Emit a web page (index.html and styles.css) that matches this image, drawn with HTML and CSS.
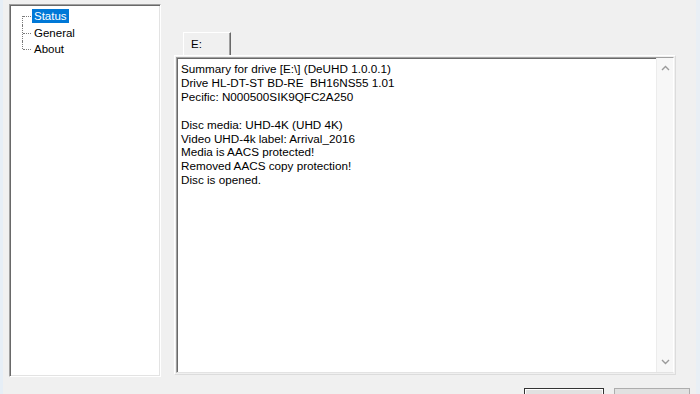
FILE: index.html
```html
<!DOCTYPE html>
<html lang="en">
<head>
  <meta charset="UTF-8" />
  <title>DeUHD</title>
  <link rel="stylesheet" href="styles.css">
</head>
<body>
  <div class="window">
    <div class="main">
      <div class="tree">
        <ul class="tree-list">
          <li class="tree-item selected"><span>Status</span></li>
          <li class="tree-item"><span>General</span></li>
          <li class="tree-item last"><span>About</span></li>
        </ul>
      </div>

      <div class="tabs">
        <div class="tab-strip">
          <div class="tab active">E:</div>
        </div>
        <div class="tab-page">
          <div class="textbox">
            <div class="log">Summary for drive [E:\] (DeUHD 1.0.0.1)
Drive HL-DT-ST BD-RE  BH16NS55 1.01
Pecific: N000500SIK9QFC2A250

Disc media: UHD-4K (UHD 4K)
Video UHD-4k label: Arrival_2016
Media is AACS protected!
Removed AACS copy protection!
Disc is opened.</div>
            <div class="scrollbar">
              <svg class="arrow" width="9" height="6" viewBox="0 0 9 6"><path d="M1 5 L4.5 1.5 L8 5" fill="none" stroke="#9a9a9a" stroke-width="1.4"/></svg>
              <svg class="arrow" width="9" height="6" viewBox="0 0 9 6"><path d="M1 1 L4.5 4.5 L8 1" fill="none" stroke="#9a9a9a" stroke-width="1.4"/></svg>
            </div>
          </div>
        </div>
      </div>
    </div>

    <div class="buttons">
      <div class="btn default"></div>
      <div class="btn"></div>
    </div>
  </div>
</body>
</html>
```

FILE: styles.css
```css
* {
  margin: 0;
  padding: 0;
  box-sizing: border-box;
}

body, html {
  width: 100%;
  height: 100%;
  overflow: hidden;
  background: #f0f0f0;
  font-family: 'Liberation Sans', Arial, sans-serif;
  font-size: 11px;
  color: #000;
}

.window {
  height: 394px;
  border-left: 3px solid #e6eef6;
  border-right: 4px solid #e9eff5;
  display: flex;
  flex-direction: column;
}

.main {
  display: flex;
  padding: 4px 0 0 6px;
  gap: 13px;
}

/* left tree view */
.tree {
  width: 152px;
  height: 373px;
  background: #fff;
  border-top: 1px solid #a0a0a0;
  border-left: 1px solid #a0a0a0;
  border-right: 1px solid #fff;
  border-bottom: 1px solid #fff;
  box-shadow: inset 1px 1px 0 #696969, inset -1px -1px 0 #e3e3e3;
  padding: 3px 0 0 12px;
}

.tree-list {
  list-style: none;
}

.tree-item {
  position: relative;
  height: 16.5px;
  padding-left: 10px;
  display: flex;
  align-items: center;
  font-size: 11.5px;
}

.tree-item span {
  padding: 0 2px;
  line-height: 14px;
}

.tree-item.selected span {
  background: #0078d7;
  color: #fff;
}

.tree-item::before {
  content: '';
  position: absolute;
  left: 0;
  top: 0;
  bottom: 0;
  border-left: 1px dotted #7a7a7a;
}

.tree-item:first-child::before {
  top: 50%;
}

.tree-item.last::before {
  bottom: 50%;
}

.tree-item::after {
  content: '';
  position: absolute;
  left: 1px;
  top: 50%;
  width: 8px;
  border-top: 1px dotted #7a7a7a;
}

/* tab control */
.tabs {
  width: 502px;
  padding-top: 28px;
}

.tab-strip {
  display: flex;
  padding-left: 9px;
  height: 23px;
}

.tab {
  width: 48px;
  height: 23px;
  background: #f0f0f0;
  border-top: 1px solid #fff;
  border-left: 1px solid #fff;
  border-right: 1px solid #696969;
  box-shadow: inset -1px 0 0 #a0a0a0;
  padding: 5px 0 0 7px;
  font-size: 11.5px;
}

.tab-page {
  height: 320px;
  border: 1px solid #fff;
  border-right-color: #dcdcdc;
  border-bottom-color: #dcdcdc;
  padding: 1px;
}

.textbox {
  height: 100%;
  background: #fff;
  display: flex;
  border-top: 1px solid #a0a0a0;
  border-left: 1px solid #a0a0a0;
  border-right: 1px solid #fff;
  border-bottom: 1px solid #e3e3e3;
  box-shadow: inset 1px 1px 0 #696969;
}

.log {
  flex: 1;
  white-space: pre;
  padding: 4px 0 0 4px;
  line-height: 13.9px;
  font-size: 11.7px;
}

.scrollbar {
  width: 17px;
  background: #f7f7f7;
  border-left: 1px solid #ececec;
  display: flex;
  flex-direction: column;
  justify-content: space-between;
  align-items: center;
  padding: 7px 0 7px;
}

/* dialog buttons, cut off at the bottom */
.buttons {
  display: flex;
  justify-content: flex-end;
  gap: 10px;
  padding: 11px 6px 0 0;
}

.btn {
  width: 76px;
  height: 23px;
  background: #e1e1e1;
  border: 1px solid #adadad;
}

.btn.default {
  width: 80px;
  border: 1px solid #333;
  box-shadow: inset 0 0 0 1px #fff;
}
```
